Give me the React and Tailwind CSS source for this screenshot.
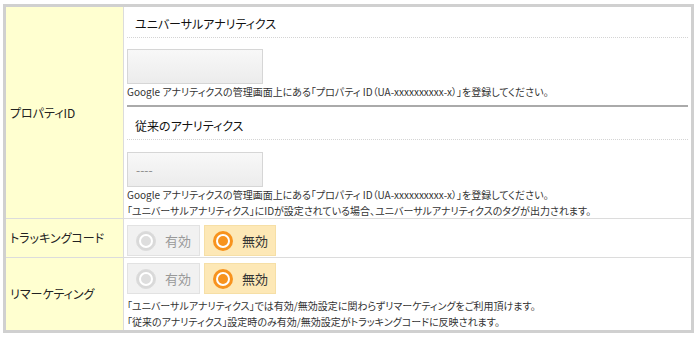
import React from 'react';

// 設定テーブル: プロパティID / トラッキングコード / リマーケティング

const FONT = { fontFamily: '"Noto Sans CJK JP", "Noto Sans", sans-serif' };

function Radio({ label, checked }) {
  return (
    <div
      className={
        checked
          ? 'flex items-center gap-[9px] w-[72px] h-[31px] pl-[8px] bg-[#fde8b6] border border-[#f6dfa6]'
          : 'flex items-center gap-[9px] w-[73px] h-[31px] pl-[8px] bg-[#f1f1f1] border border-[#e2e2e2]'
      }
    >
      {checked ? (
        <span className="w-[20px] h-[20px] rounded-full bg-[#f7931e] flex items-center justify-center">
          <span className="w-[14px] h-[14px] rounded-full bg-white flex items-center justify-center">
            <span className="w-[10px] h-[10px] rounded-full bg-[#f7931e]" />
          </span>
        </span>
      ) : (
        <span className="w-[20px] h-[20px] rounded-full bg-[#d9d9d9] border border-[#dcdcdc] flex items-center justify-center">
          <span className="w-[14px] h-[14px] rounded-full bg-[#dedede] border-2 border-white" />
        </span>
      )}
      <span className={checked ? 'text-[13px] text-[#333]' : 'text-[13px] text-[#999]'}>{label}</span>
    </div>
  );
}

function Input({ value }) {
  return (
    <div className="w-[136px] h-[35px] border border-[#d6d6d6] bg-gradient-to-b from-[#f8f8f8] to-[#ececec] flex items-center px-[8px] text-[12px] text-[#888]">
      {value}
    </div>
  );
}

const Help = ({ children }) => (
  <p className="text-[10px] leading-[16px] text-[#333] whitespace-nowrap">{children}</p>
);

const Label = ({ children }) => (
  <div className="w-[118px] shrink-0 bg-[#ffffd0] border-r border-[#dcdcdc] flex items-center pl-[4px] text-[12px] text-[#222]">
    {children}
  </div>
);

export default function App() {
  return (
    <div className="w-[700px] h-[340px] bg-white pt-[4px] pl-[3px] [font-feature-settings:'palt']" style={FONT}>
      <div className="w-[691px] h-[329px] border-[3px] border-[#d0d0d0] flex flex-col">
        {/* プロパティID */}
        <div className="flex h-[212px] border-b border-[#dcdcdc]">
          <Label>プロパティID</Label>
          <div className="flex-1 min-w-0 px-[3px]">
            <div className="h-[31px] pt-[4px] flex items-center pl-[8px] text-[12px] text-[#111] border-b border-dotted border-[#d4d4d4]">
              ユニバーサルアナリティクス
            </div>
            <div className="pt-[11px]">
              <Input value="" />
              <Help>Google アナリティクスの管理画面上にある「プロパティ ID（UA-xxxxxxxxxx-x）」を登録してください。</Help>
            </div>
            <div className="mt-[5px] border-t-2 border-[#aaaaaa]" />
            <div className="h-[33px] pt-[6px] flex items-center pl-[8px] text-[12px] text-[#111] border-b border-dotted border-[#d4d4d4]">
              従来のアナリティクス
            </div>
            <div className="pt-[12px]">
              <Input value="----" />
              <Help>Google アナリティクスの管理画面上にある「プロパティ ID（UA-xxxxxxxxxx-x）」を登録してください。</Help>
              <Help>「ユニバーサルアナリティクス」にIDが設定されている場合、ユニバーサルアナリティクスのタグが出力されます。</Help>
            </div>
          </div>
        </div>

        {/* トラッキングコード */}
        <div className="flex h-[42px] border-b border-[#dcdcdc]">
          <Label>トラッキングコード</Label>
          <div className="flex-1 min-w-0 px-[3px] pt-[6px] flex gap-[4px]">
            <Radio label="有効" />
            <Radio label="無効" checked />
          </div>
        </div>

        {/* リマーケティング */}
        <div className="flex flex-1">
          <Label>リマーケティング</Label>
          <div className="flex-1 min-w-0 px-[3px] pt-[5px]">
            <div className="flex gap-[4px] mb-[4px]">
              <Radio label="有効" />
              <Radio label="無効" checked />
            </div>
            <Help>「ユニバーサルアナリティクス」では有効/無効設定に関わらずリマーケティングをご利用頂けます。</Help>
            <Help>「従来のアナリティクス」設定時のみ有効/無効設定がトラッキングコードに反映されます。</Help>
          </div>
        </div>
      </div>
    </div>
  );
}
